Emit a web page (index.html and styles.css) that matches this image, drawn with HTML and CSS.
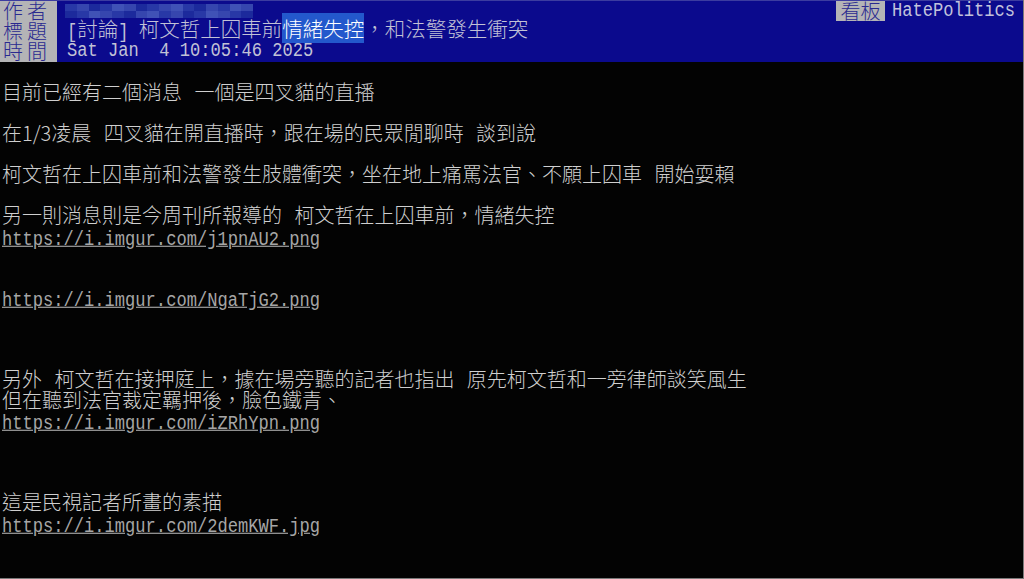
FILE: index.html
```html
<!DOCTYPE html>
<html lang="zh-Hant">
<head>
    <meta charset="UTF-8">
    <title>HatePolitics</title>
    <link rel="stylesheet" href="styles.css">
</head>
<body>
    <div class="screen">
        <div class="head">
            <div class="hrow">
                <span class="hlabel">作者</span>
                <span class="author">
                    <span class="px-row">
                        <i class="c1"></i><i class="c2"></i><i class="c3"></i><i class="c1"></i><i class="c4"></i><i class="c2"></i><i class="c3"></i><i class="c1"></i>
                        <i class="c2"></i><i class="c4"></i><i class="c1"></i><i class="c3"></i><i class="c2"></i><i class="c1"></i><i class="c4"></i><i class="c2"></i>
                    </span>
                    <span class="px-row">
                        <i class="c3"></i><i class="c1"></i><i class="c4"></i><i class="c2"></i><i class="c1"></i><i class="c3"></i><i class="c2"></i><i class="c4"></i>
                        <i class="c1"></i><i class="c2"></i><i class="c3"></i><i class="c1"></i><i class="c4"></i><i class="c2"></i><i class="c1"></i><i class="c3"></i>
                    </span>
                </span>
                <span class="board-label">看板</span>
                <span class="board mono">HatePolitics</span>
            </div>
            <div class="hrow">
                <span class="hlabel">標題</span>
                <span class="htext"><span class="mono">[</span>討論<span class="mono">] </span>柯文哲上囚車前<span class="mark">情緒失控</span>，和法警發生衝突</span>
            </div>
            <div class="hrow">
                <span class="hlabel">時間</span>
                <span class="htext mono">Sat Jan  4 10:05:46 2025</span>
            </div>
        </div>

        <div class="body">
            <div class="line"></div>
            <div class="line">目前已經有二個消息 一個是四叉貓的直播</div>
            <div class="line"></div>
            <div class="line">在1/3凌晨 四叉貓在開直播時，跟在場的民眾閒聊時 談到說</div>
            <div class="line"></div>
            <div class="line">柯文哲在上囚車前和法警發生肢體衝突，坐在地上痛罵法官、不願上囚車 開始耍賴</div>
            <div class="line"></div>
            <div class="line">另一則消息則是今周刊所報導的 柯文哲在上囚車前，情緒失控</div>
            <div class="line"><a class="url mono">https://i.imgur.com/j1pnAU2.png</a></div>
            <div class="line"></div>
            <div class="line"></div>
            <div class="line"><a class="url mono">https://i.imgur.com/NgaTjG2.png</a></div>
            <div class="line"></div>
            <div class="line"></div>
            <div class="line"></div>
            <div class="line">另外 柯文哲在接押庭上，據在場旁聽的記者也指出 原先柯文哲和一旁律師談笑風生</div>
            <div class="line">但在聽到法官裁定羈押後，臉色鐵青、</div>
            <div class="line"><a class="url mono">https://i.imgur.com/iZRhYpn.png</a></div>
            <div class="line"></div>
            <div class="line"></div>
            <div class="line"></div>
            <div class="line">這是民視記者所畫的素描</div>
            <div class="line"><a class="url mono">https://i.imgur.com/2demKWF.jpg</a></div>
        </div>
    </div>
</body>
</html>
```

FILE: styles.css
```css
html, body {
    margin: 0;
    padding: 0;
    background-color: #000;
}
body {
    font-family: "Noto Sans CJK TC", "Noto Sans CJK SC", sans-serif;
    font-size: 20px;
    font-weight: 300;
    color: #cfcfcf;
}
.screen {
    width: 1023px;
    height: 578px;
    border-right: 1px solid #7a7a7a;
    border-bottom: 1px solid #7a7a7a;
    overflow: hidden;
    background-color: #030303;
}
.mono {
    font-family: "Liberation Mono", monospace;
    font-size: 17.1px;
    font-weight: 400;
    white-space: pre;
    display: inline-block;
    transform: scaleY(1.15);
}

/* header */
.head {
    background-color: #0b0a8d;
    border-top: 1px solid #3c3ca0;
}
.hrow {
    display: flex;
    align-items: center;
    height: 20.5px;
    line-height: 20.5px;
    padding-right: 8px;
}
.hrow:first-child {
    height: 19.5px;
}
.hlabel {
    display: flex;
    align-items: center;
    align-self: stretch;
    width: 54px;
    padding-left: 3px;
    background-color: #b4b4b6;
    color: #2a2a90;
    font-size: 20px;
    letter-spacing: 4px;
    line-height: 20px;
    white-space: nowrap;
}
.htext {
    margin-left: 10px;
    color: #c2c2d6;
    font-size: 20.5px;
    white-space: pre;
}
.htext.mono {
    font-size: 17.1px;
}
.mark {
    background-color: #2358cc;
    color: #fff;
}
.author {
    display: flex;
    flex-direction: column;
    margin-left: 8px;
}
.px-row {
    display: flex;
}
.author i {
    width: 11.75px;
    height: 7px;
}
.author .c1 { background-color: #2838a6; }
.author .c2 { background-color: #3646ae; }
.author .c3 { background-color: #1c2a9c; }
.author .c4 { background-color: #4052b6; }
.board-label {
    display: flex;
    align-items: center;
    justify-content: center;
    align-self: stretch;
    margin-left: auto;
    width: 49px;
    background-color: #b4b4b6;
    color: #2a2a90;
    font-size: 20px;
    line-height: 20px;
}
.board {
    margin-left: 7px;
    color: #c2c2dc;
}

/* article body */
.body {
    padding-left: 2px;
}
.line {
    height: 20.5px;
    line-height: 20.5px;
    white-space: pre;
    word-spacing: 8px;
}
.url {
    color: #a6a6a6;
    text-decoration: underline;
    word-spacing: 0;
}
```
